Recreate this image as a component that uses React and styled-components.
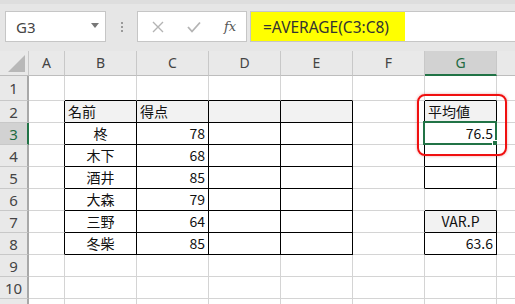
import React from "react";
import styled, { createGlobalStyle } from "styled-components";

const GlobalStyle = createGlobalStyle`
  html, body { margin: 0; padding: 0; background: #fff; overflow: hidden; }
  body { font-family: "Noto Sans", "Noto Sans CJK JP", sans-serif; }
`;

const COLS = ["A", "B", "C", "D", "E", "F", "G", "H"];
const ROWS = [1, 2, 3, 4, 5, 6, 7, 8, 9, 10, 11];

const CELLS = {
  B2: { text: "名前", align: "left", fill: true },
  C2: { text: "得点", align: "left", fill: true },
  D2: { fill: true },
  E2: { fill: true },
  B3: { text: "柊", align: "center" },
  B4: { text: "木下", align: "center" },
  B5: { text: "酒井", align: "center" },
  B6: { text: "大森", align: "center" },
  B7: { text: "三野", align: "center" },
  B8: { text: "冬柴", align: "center" },
  C3: { text: "78", align: "right" },
  C4: { text: "68", align: "right" },
  C5: { text: "85", align: "right" },
  C6: { text: "79", align: "right" },
  C7: { text: "64", align: "right" },
  C8: { text: "85", align: "right" },
  G2: { text: "平均値", align: "left", fill: true },
  G3: { text: "76.5", align: "right" },
  G7: { text: "VAR.P", align: "center", fill: true },
  G8: { text: "63.6", align: "right" },
};

const BOXES = [
  { c1: 1, c2: 4, r1: 2, r2: 8 },
  { c1: 6, c2: 6, r1: 2, r2: 5 },
  { c1: 6, c2: 6, r1: 7, r2: 8 },
];

const isBox = (c, r) =>
  BOXES.some((b) => c >= b.c1 && c <= b.c2 && r >= b.r1 && r <= b.r2);

const Page = styled.div`
  width: 515px;
  height: 304px;
  display: flex;
  flex-direction: column;
  overflow: hidden;
`;

const TopBar = styled.div`
  height: 51px;
  flex: none;
  box-sizing: border-box;
  background: #e6e6e6;
  border-top: 4px solid #dedede;
  padding: 7px 0 0 5px;
  display: flex;
  align-items: flex-start;
`;

const NameBox = styled.div`
  width: 101px;
  height: 31px;
  box-sizing: border-box;
  background: #fff;
  border: 1px solid #c6c6c6;
  display: flex;
  align-items: center;
  justify-content: space-between;
  padding: 0 6px 0 10px;
  font-size: 15px;
  color: #444;
`;

const Caret = styled.span`
  width: 0;
  height: 0;
  border-left: 4px solid transparent;
  border-right: 4px solid transparent;
  border-top: 5px solid #777;
  margin-top: -3px;
`;

const Dots = styled.div`
  width: 31px;
  height: 31px;
  display: flex;
  flex-direction: column;
  align-items: center;
  justify-content: center;
  gap: 2px;

  span {
    width: 2px;
    height: 2px;
    background: #9a9a9a;
  }
`;

const FxBox = styled.div`
  width: 110px;
  height: 31px;
  box-sizing: border-box;
  background: #fff;
  border: 1px solid #c6c6c6;
  display: flex;
  align-items: center;
  padding-left: 9px;
  gap: 14px;
`;

const FxIcon = styled.span`
  width: 22px;
  display: flex;
  justify-content: center;
  font-family: "DejaVu Serif", "Liberation Serif", serif;
  font-style: italic;
  font-size: 13px;
  color: #555;
`;

const FormulaBar = styled.div`
  flex: 1;
  margin-left: 3px;
  height: 31px;
  box-sizing: border-box;
  background: #fff;
  border: 1px solid #c6c6c6;
  border-right: none;
  display: flex;
`;

const Formula = styled.div`
  width: 154px;
  background: #ffff00;
  box-sizing: border-box;
  padding-left: 12px;
  display: flex;
  align-items: center;
  font-size: 15.5px;
  color: #333;
`;

const Sheet = styled.div`
  position: relative;
  flex: 1;
  display: grid;
  grid-template-columns: 29px 36px repeat(7, 72px);
  grid-template-rows: 25px 25px repeat(10, 22px);
`;

const Corner = styled.div`
  background: #e9e9e9;
  border-right: 1px solid #c8c8c8;
  border-bottom: 1px solid #bdbdbd;
  display: flex;
  align-items: flex-end;
  justify-content: flex-end;
  padding: 0 3px 3px 0;
`;

const ColHead = styled.div`
  background: ${(p) => (p.$sel ? "#d2d2d2" : "#e9e9e9")};
  border-right: 1px solid #c8c8c8;
  border-bottom: ${(p) => (p.$sel ? "2px solid #217346" : "1px solid #bdbdbd")};
  display: flex;
  align-items: center;
  justify-content: center;
  font-size: 14px;
  color: ${(p) => (p.$sel ? "#1e6b42" : "#444")};
  padding-bottom: ${(p) => (p.$sel ? "0" : "1px")};
`;

const RowHead = styled.div`
  background: ${(p) => (p.$sel ? "#d2d2d2" : "#e9e9e9")};
  border-right: ${(p) => (p.$sel ? "2px solid #217346" : "2px solid #a8a8a8")};
  border-bottom: 1px solid #c8c8c8;
  display: flex;
  align-items: center;
  justify-content: center;
  font-size: 15px;
  color: ${(p) => (p.$sel ? "#1e6b42" : "#444")};
`;

const Cell = styled.div`
  position: relative;
  box-sizing: border-box;
  background: ${(p) => (p.$fill ? "#f2f2f2" : "#fff")};
  border-right: 1px solid ${(p) => (p.$br ? "#000" : "#d4d4d4")};
  border-bottom: 1px solid ${(p) => (p.$bb ? "#000" : "#d4d4d4")};
  display: flex;
  align-items: flex-end;
  justify-content: ${(p) =>
    p.$align === "right" ? "flex-end" : p.$align === "center" ? "center" : "flex-start"};
  padding: 0 3px 1px 3px;
  font-family: "Noto Sans CJK JP", "Noto Sans", sans-serif;
  font-size: 14px;
  line-height: 20px;
  color: #111;
  white-space: nowrap;
`;

const Selection = styled.div`
  position: absolute;
  left: -2px;
  top: -2px;
  right: -1px;
  bottom: -1px;
  border: 2px solid #217346;
  pointer-events: none;

  &::after {
    content: "";
    position: absolute;
    right: -4px;
    bottom: -4px;
    width: 5px;
    height: 5px;
    background: #217346;
    border: 1px solid #fff;
  }
`;

const Callout = styled.div`
  position: absolute;
  left: 417px;
  top: 43px;
  width: 90px;
  height: 62px;
  box-sizing: border-box;
  border: 2px solid #f01010;
  border-radius: 8px;
  box-shadow: 0 0 3px rgba(200, 0, 0, 0.35);
  pointer-events: none;
`;

export default function App() {
  return (
    <Page>
      <GlobalStyle />
      <TopBar>
        <NameBox>
          G3
          <Caret />
        </NameBox>
        <Dots>
          <span />
          <span />
          <span />
        </Dots>
        <FxBox>
          <FxIcon>
            <svg width="12" height="12" viewBox="0 0 12 12">
              <path d="M1 1 L11 11 M11 1 L1 11" stroke="#b4b4b4" strokeWidth="1.4" fill="none" />
            </svg>
          </FxIcon>
          <FxIcon>
            <svg width="14" height="12" viewBox="0 0 14 12">
              <path d="M1 6 L5 10.5 L13 1.5" stroke="#b4b4b4" strokeWidth="1.8" fill="none" />
            </svg>
          </FxIcon>
          <FxIcon>fx</FxIcon>
        </FxBox>
        <FormulaBar>
          <Formula>=AVERAGE(C3:C8)</Formula>
        </FormulaBar>
      </TopBar>
      <Sheet>
        <Corner>
          <svg width="17" height="17" viewBox="0 0 17 17">
            <polygon points="17,0 17,17 0,17" fill="#b8b8b8" />
          </svg>
        </Corner>
        {COLS.map((c) => (
          <ColHead key={c} $sel={c === "G"}>
            {c}
          </ColHead>
        ))}
        {ROWS.map((r) => (
          <React.Fragment key={r}>
            <RowHead $sel={r === 3}>{r < 11 ? r : ""}</RowHead>
            {COLS.map((c, ci) => {
              const id = c + r;
              const cell = CELLS[id] || {};
              return (
                <Cell
                  key={id}
                  $fill={cell.fill}
                  $align={cell.align}
                  $br={isBox(ci, r) || isBox(ci + 1, r)}
                  $bb={isBox(ci, r) || isBox(ci, r + 1)}
                >
                  {cell.text}
                  {id === "G3" && <Selection />}
                </Cell>
              );
            })}
          </React.Fragment>
        ))}
        <Callout />
      </Sheet>
    </Page>
  );
}
